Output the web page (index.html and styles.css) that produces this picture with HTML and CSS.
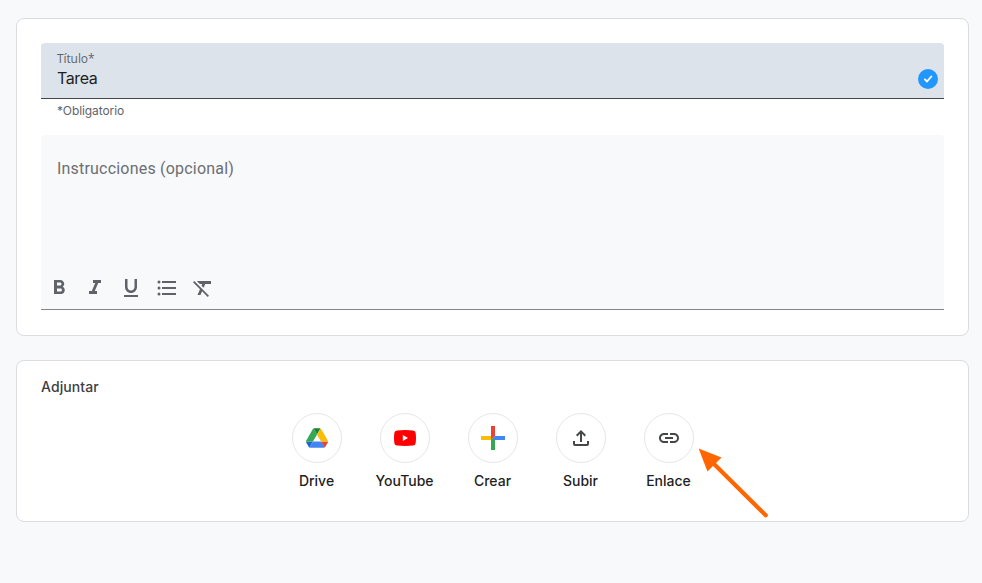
FILE: index.html
```html
<!DOCTYPE html>
<html lang="es">
<head>
<meta charset="utf-8">
<title>Tarea</title>
<link rel="stylesheet" href="styles.css">
</head>
<body>
<main class="page">
  <section class="card details">
    <div class="title-field">
      <div class="title-text">
        <span class="field-label">Título*</span>
        <span class="field-value">Tarea</span>
      </div>
      <svg class="check" viewBox="0 0 20 20"><circle cx="10" cy="10" r="10" fill="#2196fd"/><path d="M6.900 10.400l2.100 2.100 4.300-5" fill="none" stroke="#fff" stroke-width="1.900" stroke-linecap="round" stroke-linejoin="round"/></svg>
    </div>
    <div class="helper">*Obligatorio</div>
    <div class="editor">
      <div class="placeholder">Instrucciones (opcional)</div>
      <div class="toolbar">
        <svg viewBox="0 0 24 24"><path d="M15.6 10.79c.97-.67 1.65-1.77 1.65-2.79 0-2.26-1.75-4-4-4H7v14h7.04c2.09 0 3.71-1.7 3.71-3.79 0-1.52-.86-2.82-2.15-3.42zM10 6.5h3c.83 0 1.5.67 1.5 1.5s-.67 1.5-1.5 1.5h-3v-3zm3.5 9H10v-3h3.5c.83 0 1.5.67 1.5 1.5s-.67 1.5-1.5 1.5z"/></svg>
        <svg viewBox="0 0 24 24"><path d="M10 4v3h2.21l-3.42 8H6v3h8v-3h-2.21l3.42-8H18V4z"/></svg>
        <svg viewBox="0 0 24 24"><path d="M12 17c3.31 0 6-2.69 6-6V3h-2.5v8c0 1.93-1.57 3.5-3.5 3.5S8.500 12.930 8.500 11V3H6v8c0 3.310 2.690 6 6 6zm-7 2v2h14v-2H5z"/></svg>
        <svg viewBox="0 0 24 24"><circle cx="4" cy="6" r="1.500"/><circle cx="4" cy="12" r="1.500"/><circle cx="4" cy="18" r="1.500"/><path d="M7 5h14v2H7zM7 11h14v2H7zM7 17h14v2H7z"/></svg>
        <svg viewBox="0 0 24 24"><path d="M3.270 5L2 6.270l6.970 6.970L6.500 19h3l1.570-3.660L16.730 21 18 19.730 3.550 5.270 3.270 5zM6 5v.18L8.820 8h2.400l-.72 1.680 2.100 2.100L14.210 8H20V5H6z"/></svg>
      </div>
    </div>
  </section>

  <section class="card attach">
    <h2 class="attach-title">Adjuntar</h2>
    <div class="options">
      <div class="option">
        <span class="circle"><svg width="22" height="20" viewBox="0 0 87.3 78"><path fill="#1967d2" d="M6.600 66.850l3.850 6.650c.8 1.400 1.950 2.500 3.300 3.300L27.500 53H0c0 1.550.4 3.100 1.200 4.500z"/><path fill="#34a853" d="M43.650 25L29.900 1.200c-1.350.8-2.500 1.900-3.300 3.300L1.200 48.500A9 9 0 0 0 0 53h27.500z"/><path fill="#ea4335" d="M73.550 76.800c1.350-.8 2.500-1.900 3.300-3.300l1.600-2.750 7.650-13.250c.8-1.400 1.200-2.950 1.200-4.500H59.800l5.850 11.500z"/><path fill="#188038" d="M43.650 25L57.400 1.200C56.050.4 54.500 0 52.900 0H34.400c-1.600 0-3.150.45-4.500 1.200z"/><path fill="#4285f4" d="M59.800 53H27.500L13.750 76.800c1.350.8 2.900 1.200 4.500 1.200h50.800c1.600 0 3.150-.45 4.500-1.200z"/><path fill="#fbbc04" d="M73.400 26.500L60.700 4.500c-.8-1.400-1.950-2.500-3.300-3.300L43.650 25 59.800 53h27.450c0-1.550-.4-3.100-1.200-4.500z"/></svg></span>
        <span class="name">Drive</span>
      </div>
      <div class="option">
        <span class="circle"><svg width="22" height="16" viewBox="0 0 22 16"><path fill="#f00" d="M3 .4Q11-.4 19 .4q2.300.2 2.600 2.400.8 5.200 0 10.400-.3 2.200-2.600 2.400-8 .8-16 0-2.300-.2-2.600-2.400-.8-5.200 0-10.400Q.7.600 3 .4z"/><path fill="#fff" d="M8.800 4.900v6.200L14 8z"/></svg></span>
        <span class="name">YouTube</span>
      </div>
      <div class="option">
        <span class="circle"><svg width="24" height="24" viewBox="0 0 24 24"><path fill="#fbbc04" d="M0 10h11v4H0z"/><path fill="#34a853" d="M10 14l2-2 2 2v10h-4z"/><path fill="#4285f4" d="M14 10h10v4H12v-2z"/><path fill="#ea4335" d="M10 0h4v10l-4 4z"/></svg></span>
        <span class="name">Crear</span>
      </div>
      <div class="option">
        <span class="circle"><svg width="24" height="24" viewBox="0 0 24 24" fill="none" stroke="#444746" stroke-width="2"><path d="M12 16V5.500M7.700 9.700L12 5.400l4.300 4.300M5 15v3a1 1 0 0 0 1 1h12a1 1 0 0 0 1-1v-3"/></svg></span>
        <span class="name">Subir</span>
      </div>
      <div class="option">
        <span class="circle"><svg width="24" height="24" viewBox="0 0 24 24" fill="#444746"><path d="M3.900 12c0-1.710 1.390-3.100 3.100-3.100h4V7H7c-2.760 0-5 2.240-5 5s2.240 5 5 5h4v-1.900H7c-1.710 0-3.100-1.390-3.100-3.100zM8 13h8v-2H8v2zm9-6h-4v1.900h4c1.710 0 3.100 1.390 3.100 3.100s-1.390 3.100-3.100 3.100h-4V17h4c2.760 0 5-2.240 5-5s-2.240-5-5-5z"/></svg></span>
        <span class="name">Enlace</span>
      </div>
    </div>
    <svg class="pointer" viewBox="0 0 70 70"><path d="M16 16L67.700 67.300" stroke="#ff6500" stroke-width="4.200" stroke-linecap="round"/><path d="M.6.600L23.500 9.500 9.500 23.500z" fill="#ff6500"/></svg>
  </section>
</main>
</body>
</html>
```

FILE: styles.css
```css
* { box-sizing: border-box; }

body {
  margin: 0;
  background: #f8f9fb;
  font-family: Inter, "Liberation Sans", sans-serif;
  color: #1f1f1f;
}

.page {
  display: flex;
  flex-direction: column;
  gap: 24px;
  padding: 18px 13px 0 16px;
  height: 583px;
}

.card {
  background: #fff;
  border: 1px solid #dadce0;
  border-radius: 8px;
}

.details { height: 318px; padding: 24px; }

.title-field {
  display: flex;
  justify-content: space-between;
  height: 56px;
  padding: 8px 6px 0 16px;
  background: #dde3ea;
  border-bottom: 1px solid #444746;
  border-radius: 4px 4px 0 0;
}

.title-text { display: flex; flex-direction: column; }

.field-label {
  font-family: "Open Sans", sans-serif;
  font-size: 12px;
  line-height: 16px;
  letter-spacing: -0.1px;
  color: #5f6368;
}

.field-value {
  font-size: 16px;
  line-height: 22px;
  letter-spacing: -0.4px;
}

.check { width: 20px; height: 20px; margin-top: 18px; }

.helper {
  height: 36px;
  padding: 4px 16px 0;
  font-size: 12px;
  line-height: 16px;
  letter-spacing: -0.08px;
  color: #5f6368;
}

.editor {
  display: flex;
  flex-direction: column;
  justify-content: space-between;
  height: 175px;
  padding: 22px 6px 9px;
  background: #f8f9fb;
  border-bottom: 1px solid #80868b;
  border-radius: 4px 4px 0 0;
}

.placeholder {
  padding-left: 10px;
  font: 16px/24px Roboto, sans-serif;
  letter-spacing: 0.2px;
  color: #6b6f73;
}

.toolbar { display: flex; gap: 12px; }
.toolbar svg { width: 24px; height: 24px; fill: #5f6368; }

.attach {
  position: relative;
  height: 162px;
  padding: 16px 24px;
}

.attach-title {
  margin: 0;
  font-size: 14px;
  font-weight: 500;
  line-height: 20px;
  letter-spacing: 0.1px;
  color: #3c4043;
}

.options {
  display: flex;
  justify-content: center;
  margin-top: 16px;
}

.option {
  display: flex;
  flex-direction: column;
  align-items: center;
  width: 88px;
}

.circle {
  display: flex;
  align-items: center;
  justify-content: center;
  width: 50px;
  height: 50px;
  border: 1px solid #e4e6e9;
  border-radius: 50%;
}

.name {
  margin-top: 8px;
  font-size: 14px;
  font-weight: 500;
  line-height: 20px;
}

.pointer {
  position: absolute;
  left: 681px;
  top: 87px;
  width: 70px;
  height: 70px;
}
```
